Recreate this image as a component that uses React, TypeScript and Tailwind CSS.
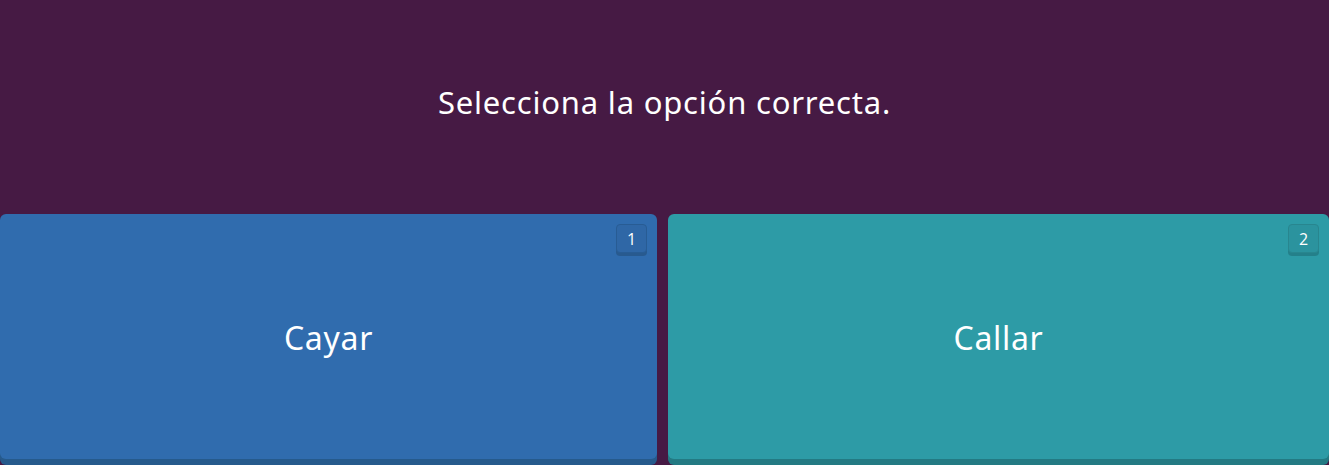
const font = { fontFamily: '"Noto Sans", sans-serif' };

function Choice({ label, num, tone }: { label: string; num: number; tone: "blue" | "teal" }) {
	const body =
		tone === "blue"
			? "bg-[#306cae] shadow-[0_6px_0_#265a8c]"
			: "bg-[#2d9ba6] shadow-[0_6px_0_#237a83]";
	const badge =
		tone === "blue"
			? "bg-[#2f67a6] border-[#285c94] shadow-[0_3px_0_#285a8f]"
			: "bg-[#2b939e] border-[#28868f] shadow-[0_3px_0_#24808a]";
	return (
		<div className={`relative h-[245px] rounded-md flex items-center justify-center ${body}`}>
			<span className="text-white text-[32px] tracking-[0.7px] leading-none pt-[2px]">{label}</span>
			<div
				className={`absolute top-[10px] right-[10px] w-[31px] h-[29px] rounded border flex items-center justify-center text-white text-[16px] ${badge}`}
				style={{ fontFamily: '"Open Sans", sans-serif' }}>
				{num}
			</div>
		</div>
	);
}

export default function App() {
	return (
		<div className="w-[1329px] h-[465px] bg-[#461a44] overflow-hidden flex flex-col" style={font}>
			<div className="h-[214px] flex items-start justify-center pt-[87px]">
				<h1 className="text-white text-[31px] tracking-[0.8px] leading-none">Selecciona la opción correcta.</h1>
			</div>
			<div className="grid grid-cols-[657px_1fr] gap-[11px]">
				<Choice label="Cayar" num={1} tone="blue" />
				<Choice label="Callar" num={2} tone="teal" />
			</div>
		</div>
	);
}
